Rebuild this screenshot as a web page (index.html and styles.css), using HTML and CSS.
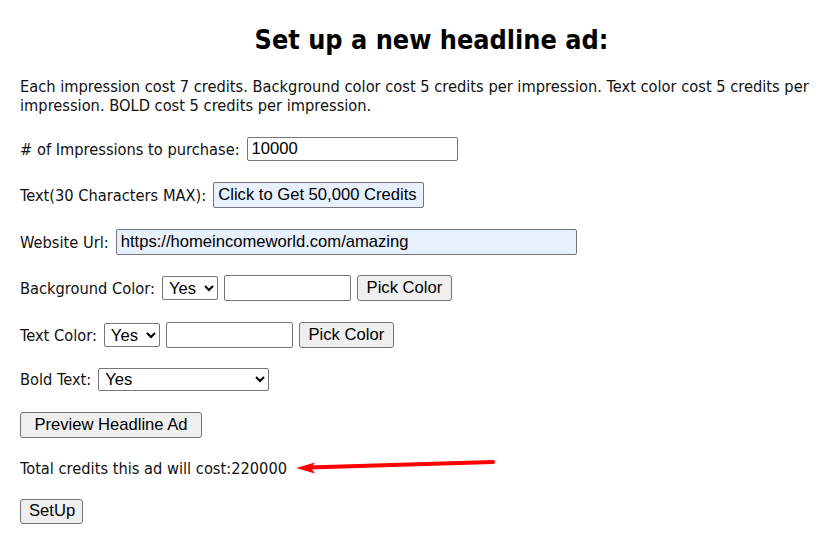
FILE: index.html
```html
<!DOCTYPE html>
<html>
<head>
<meta charset="utf-8">
<title>Set up a new headline ad</title>
<link rel="stylesheet" href="styles.css">
</head>
<body>
<div class="page">
  <h1 class="title">Set up a new headline ad:</h1>
  <p class="info">Each impression cost 7 credits. Background color cost 5 credits per impression. Text color cost 5 credits per impression. BOLD cost 5 credits per impression.</p>

  <form class="form">
    <div class="row r1">
      <label class="lbl"># of Impressions to purchase:</label>
      <input class="field f-imp" type="text" value="10000">
    </div>
    <div class="row r2">
      <label class="lbl">Text(30 Characters MAX):</label>
      <input class="field filled f-text" type="text" value="Click to Get 50,000 Credits">
    </div>
    <div class="row r3">
      <label class="lbl">Website Url:</label>
      <input class="field filled f-url" type="text" value="https://homeincomeworld.com/amazing">
    </div>
    <div class="row r4">
      <label class="lbl">Background Color:</label>
      <select class="sel sel-yes"><option>Yes</option><option>No</option></select>
      <input class="field f-color" type="text" value="">
      <button type="button" class="btn btn-pick">Pick Color</button>
    </div>
    <div class="row r5">
      <label class="lbl">Text Color:</label>
      <select class="sel sel-yes"><option>Yes</option><option>No</option></select>
      <input class="field f-color" type="text" value="">
      <button type="button" class="btn btn-pick">Pick Color</button>
    </div>
    <div class="row r6">
      <label class="lbl">Bold Text:</label>
      <select class="sel sel-bold"><option>Yes</option><option>No</option></select>
    </div>
    <div class="row r7">
      <button type="button" class="btn btn-preview">Preview Headline Ad</button>
    </div>
    <div class="row r8">
      <span class="lbl">Total credits this ad will cost:220000</span>
    </div>
    <div class="row r9">
      <button type="button" class="btn btn-setup">SetUp</button>
    </div>
  </form>
</div>

<svg class="arrow" width="220" height="24" viewBox="0 0 220 24" xmlns="http://www.w3.org/2000/svg">
  <line x1="18" y1="12.5" x2="203" y2="7" stroke="#ff0000" stroke-width="4" stroke-linecap="round"/>
  <polygon points="6,13 25,7.5 21,13 25,18.5" fill="#ff0000"/>
</svg>
</body>
</html>
```

FILE: styles.css
```css
html, body {
  margin: 0;
  padding: 0;
  background: #ffffff;
  overflow: hidden;
}

body {
  width: 832px;
  height: 551px;
  position: relative;
  font-family: "DejaVu Sans", "Liberation Sans", sans-serif;
  font-stretch: condensed;
  color: #111111;
}

.page {
  width: 823px;
  padding: 24px 0 0 20px;
}

.title {
  margin: 0;
  text-align: center;
  font-size: 26.8px;
  line-height: 32px;
  font-weight: bold;
  color: #000000;
}

.info {
  margin: 21px 0 0 0;
  font-size: 16.3px;
  line-height: 19px;
}

.form {
  margin: 0;
  display: flex;
  flex-direction: column;
}

.row {
  display: flex;
  align-items: center;
  height: 26px;
  gap: 6px;
  font-size: 16.3px;
}

.r1 { margin-top: 21px; }
.r2 { margin-top: 20px; }
.r3 { margin-top: 21px; }
.r4 { margin-top: 20px; }
.r5 { margin-top: 21px; }
.r6 { margin-top: 18px; }
.r7 { margin-top: 20px; }
.r8 { margin-top: 17px; }
.r9 { margin-top: 17px; }

.lbl {
  white-space: nowrap;
  margin-right: 1px;
}

.r8 .lbl { margin-right: 0; }

.field {
  box-sizing: border-box;
  margin: 0;
  height: 24px;
  padding: 0 4px;
  border: 1px solid #767676;
  border-radius: 2px;
  background: #ffffff;
  font-family: "Liberation Sans", Arial, sans-serif;
  font-stretch: normal;
  font-size: 16.6px;
  color: #000000;
}

.filled {
  height: 26px;
  background: #e8f0fe;
}

.f-imp { width: 211px; }
.f-text { width: 211px; }
.f-url { width: 461px; }
.f-color { width: 127px; height: 26px; }

.sel {
  box-sizing: border-box;
  margin: 0;
  height: 24px;
  padding: 0 0 0 2px;
  border: 1px solid #767676;
  border-radius: 2px;
  background: #ffffff;
  font-family: "Liberation Sans", Arial, sans-serif;
  font-stretch: normal;
  font-size: 16.6px;
  color: #000000;
}

.sel-yes { width: 56px; }
.sel-bold { width: 171px; height: 23px; }

.btn {
  box-sizing: border-box;
  margin: 0;
  height: 26px;
  padding: 0 8px;
  border: 1px solid #767676;
  border-radius: 3px;
  background: #efefef;
  font-family: "Liberation Sans", Arial, sans-serif;
  font-stretch: normal;
  font-size: 16.6px;
  color: #000000;
}

.btn-pick { width: 95px; }
.btn-preview { width: 182px; height: 26px; }
.btn-setup { width: 63px; height: 25px; }

.arrow {
  position: absolute;
  left: 290px;
  top: 455px;
}
```
